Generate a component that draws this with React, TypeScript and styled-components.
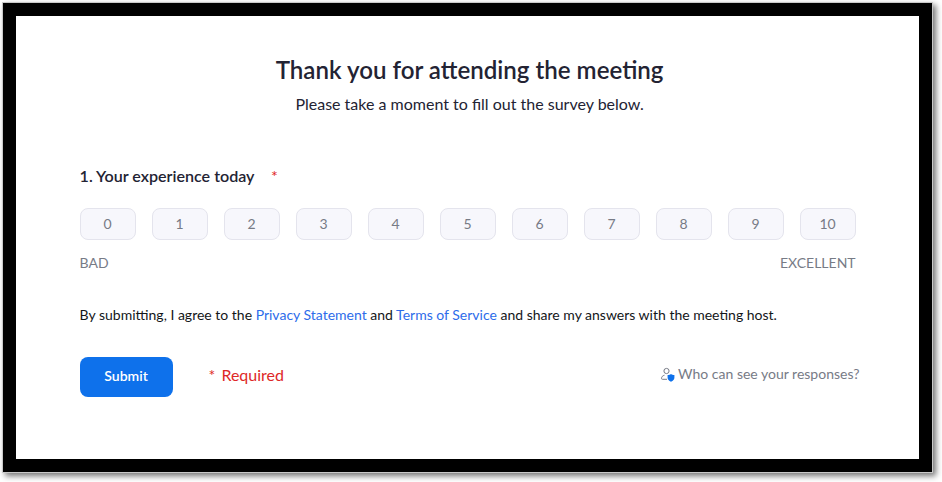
import React from "react";
import styled, { createGlobalStyle } from "styled-components";

const Global = createGlobalStyle`
  * { box-sizing: border-box; }
  body { margin: 0; background: #fff; font-family: Lato, "Open Sans", sans-serif; color: #232333; }
`;
const Page = styled.div`
  width: 942px;
  height: 482px;
  padding: 3px;
  overflow: hidden;
`;
const Frame = styled.main`
  width: 929px;
  height: 469px;
  border: 13px solid #000;
  background: #fff;
  padding: 36px 59px 0 63.6px;
  box-shadow: 0 0 0 1px #c8c8c8, 3px 3px 6px 1px rgba(0, 0, 0, 0.55);
`;
const Header = styled.header`
  width: 780px;
  text-align: center;
`;
const Title = styled.h1`
  margin: 0;
  font-size: 24.12px;
  line-height: 36px;
  font-weight: 600;
  white-space: nowrap;
`;
const Subtitle = styled.p`
  margin: 5px 0 0;
  font-size: 16px;
  line-height: 22px;
`;
const Question = styled.h2`
  display: flex;
  gap: 16.5px;
  margin: 50px 0 0;
  font-size: 16.08px;
  line-height: 22px;
  font-weight: 600;
`;
const Star = styled.span`
  color: #e02828;
  font-weight: 400;
`;
const Scale = styled.div`
  display: flex;
  gap: 16px;
  margin-top: 21px;
`;
const Score = styled.button`
  width: 56px;
  height: 32px;
  padding: 0;
  border: 1px solid #e4e4ed;
  border-radius: 8px;
  background: #f7f7fc;
  font: 400 14px/20px Lato, sans-serif;
  color: #777b86;
`;
const Ends = styled.div`
  display: flex;
  justify-content: space-between;
  width: 776px;
  margin-top: 13px;
  font-size: 14px;
  line-height: 20px;
  color: #777b86;
`;
const Terms = styled.p`
  margin: 32px 0 0;
  font-size: 14px;
  line-height: 20px;
  color: #131619;
`;
const Link = styled.a`
  color: #2d6cea;
`;
const Footer = styled.footer`
  display: flex;
  align-items: center;
  width: 780px;
  height: 40px;
  margin-top: 32px;
`;
const Submit = styled.button`
  width: 93px;
  height: 40px;
  padding: 0 0 2px;
  border: 0;
  border-radius: 8px;
  background: #0e71eb;
  color: #fff;
  font: 600 14px/20px Lato, sans-serif;
`;
const Required = styled.span`
  display: flex;
  gap: 6px;
  margin-left: 36px;
  padding-bottom: 4px;
  color: #de2828;
  font-size: 16px;
  line-height: 20px;
`;
const Privacy = styled.span`
  display: flex;
  align-items: center;
  gap: 3px;
  margin-left: auto;
  padding-bottom: 6px;
  color: #777b86;
  font-size: 14px;
  line-height: 20px;
`;
const PersonIcon = styled.svg`
  flex: none;
  width: 15px;
  height: 15px;
`;

const scores = Array.from({ length: 11 }, (_, i) => i);

export default function App() {
  return (
    <>
      <Global />
      <Page>
        <Frame>
          <Header>
            <Title>Thank you for attending the meeting</Title>
            <Subtitle>Please take a moment to fill out the survey below.</Subtitle>
          </Header>
          <Question>1. Your experience today <Star>*</Star></Question>
          <Scale>{scores.map((n) => <Score key={n}>{n}</Score>)}</Scale>
          <Ends><span>BAD</span><span>EXCELLENT</span></Ends>
          <Terms>
            By submitting, I agree to the <Link>Privacy Statement</Link> and <Link>Terms of Service</Link> and share my answers with the meeting host.
          </Terms>
          <Footer>
            <Submit>Submit</Submit>
            <Required><span>*</span><span>Required</span></Required>
            <Privacy>
              <PersonIcon viewBox="0 0 15 15" fill="none">
                <circle cx="6.5" cy="4" r="2.6" stroke="#777b86" />
                <path d="M4.5 8.2C2.5 8.700 1.500 9.900 1.500 11.400c0 .6.3.9.9.9h4.600" stroke="#777b86" />
                <path d="M11 7c.9.700 2 .9 3.400 1v2.800c0 1.800-1.300 3-3.400 3.900-2.100-.9-3.400-2.100-3.400-3.900V8c1.400-.1 2.500-.3 3.400-1Z" fill="#0e71eb" />
              </PersonIcon>
              Who can see your responses?
            </Privacy>
          </Footer>
        </Frame>
      </Page>
    </>
  );
}
